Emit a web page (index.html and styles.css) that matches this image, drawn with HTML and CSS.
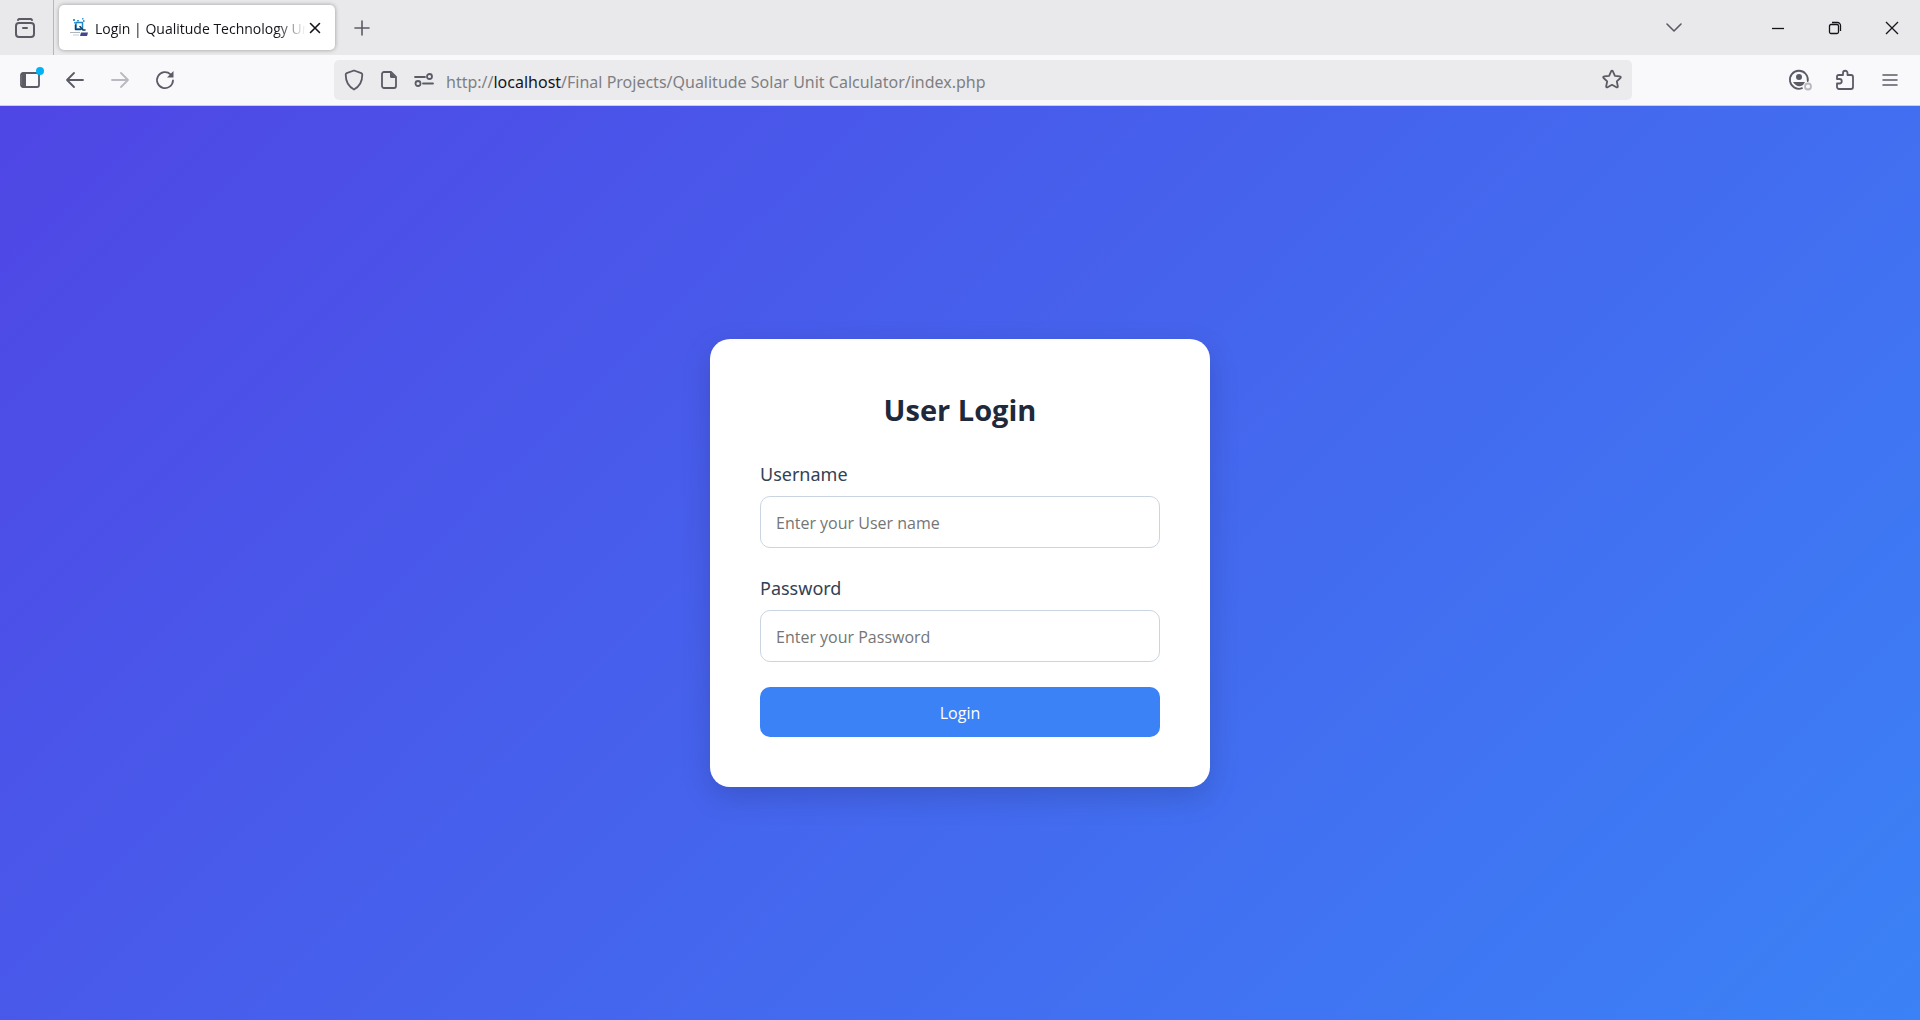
FILE: index.html
```html
<!DOCTYPE html>
<html lang="en">
<head>
<meta charset="utf-8">
<meta name="viewport" content="width=device-width, initial-scale=1">
<title>Login | Qualitude Technology Unit</title>
<link rel="stylesheet" href="styles.css">
</head>
<body>
<header class="browser">
  <div class="tabstrip">
    <button class="icon-btn recent" aria-label="Recent browsing">
      <svg width="22" height="22" viewBox="0 0 22 22"><path d="M4 3L5 2h12l1 1"/><rect x="2" y="6" width="18" height="14" rx="3"/><path d="M9 11h4"/></svg>
    </button>
    <div class="tab">
      <svg class="favicon" width="18" height="20" viewBox="0 0 18 20">
        <path d="M6 4.500h6.500v6.500H6z" fill="none" stroke="#1f86c6" stroke-width="1.500"/>
        <path d="M10 8.500l3 3.500h2" fill="none" stroke="#173f66" stroke-width="1.600"/>
        <path d="M5.500 7v4.500h5" fill="none" stroke="#173f66" stroke-width="1.500"/>
        <path d="M3 1h2v2H3zM7 2h2v1.500H7zM12 0h1.500v1.500H12zM13 2h1.500v2H13zM4 4h1.500v1.500H4z" fill="#3b9ad6"/>
        <path d="M0 14h10v1H0z" fill="#b0b4bb"/>
        <path d="M11 14.500h7l-1 3.500h-7z" fill="#41478a"/>
        <path d="M3 16.500h6v1H3z" fill="#c5cad4"/>
      </svg>
      <span class="tab-title">Login | Qualitude Technology Unit</span>
      <button class="tab-close" aria-label="Close tab"><svg width="12" height="12" viewBox="0 0 12 12"><path d="M1.500 1.500l9 9m0-9l-9 9"/></svg></button>
    </div>
    <button class="icon-btn new-tab" aria-label="New tab"><svg width="16" height="16" viewBox="0 0 16 16"><path d="M8 1v14M1 8h14"/></svg></button>
    <div class="spring"></div>
    <button class="icon-btn all-tabs" aria-label="List all tabs"><svg width="18" height="12" viewBox="0 0 18 12"><path d="M2 2l7 7 7-7"/></svg></button>
    <div class="window-controls">
      <button class="icon-btn" aria-label="Minimize"><svg width="14" height="14" viewBox="0 0 14 14"><path d="M1 7.500h12"/></svg></button>
      <button class="icon-btn" aria-label="Restore"><svg width="14" height="14" viewBox="0 0 14 14"><rect x="1.500" y="3.500" width="9" height="9" rx="1.500"/><path d="M4 1.500h5.500a3 3 0 0 1 3 3V10"/></svg></button>
      <button class="icon-btn" aria-label="Close"><svg width="14" height="14" viewBox="0 0 14 14"><path d="M1 1l12 12M13 1L1 13"/></svg></button>
    </div>
  </div>
  <div class="toolbar">
    <button class="icon-btn sidebar-btn" aria-label="Show sidebar"><svg width="22" height="18" viewBox="0 0 22 18"><rect x="2" y="2" width="18" height="14" rx="2"/><path d="M3 2h4v14H3z" fill="#5b5b66" stroke="none"/></svg><span class="dot"></span></button>
    <button class="icon-btn" aria-label="Back"><svg width="20" height="18" viewBox="0 0 20 18"><path d="M18 9H2m7-7L2 9l7 7"/></svg></button>
    <button class="icon-btn" aria-label="Forward" disabled><svg width="20" height="18" viewBox="0 0 20 18"><path d="M2 9h16m-7-7l7 7-7 7"/></svg></button>
    <button class="icon-btn" aria-label="Reload"><svg width="20" height="20" viewBox="0 0 20 20"><path d="M18 10.500a8 8 0 1 1-2.500-6.200"/><path d="M18.500 1v6.500H12z" fill="#5b5b66" stroke="none"/></svg></button>
    <div class="toolbar-gap gap-start"></div>
    <div class="urlbar">
      <button class="url-btn" aria-label="Tracking protection"><svg width="20" height="22" viewBox="0 0 20 22"><path d="M10 1.500l7.300 2.600q1 .4 1 1.500c0 6.400-2.600 12-8.300 14.900C4.300 17.600 1.700 12 1.700 5.600q0-1.100 1-1.500z"/></svg></button>
      <button class="url-btn" aria-label="Site information"><svg width="18" height="20" viewBox="0 0 18 20"><path d="M4 2h7l5 5v9a2 2 0 0 1-2 2H4a2 2 0 0 1-2-2V4a2 2 0 0 1 2-2z"/><path d="M10 2l6 6h-4.500A1.500 1.500 0 0 1 10 6.500z" fill="#5b5b66" stroke="none"/></svg></button>
      <button class="url-btn" aria-label="Permissions"><svg width="20" height="14" viewBox="0 0 20 14"><path d="M1 4h10M9 10.500h10"/><circle cx="15.500" cy="3.500" r="2.500"/><circle cx="4" cy="10.500" r="2.500"/></svg></button>
      <div class="url-text" role="textbox" aria-label="Address" tabindex="0">http://<span class="host">localhost</span>/Final Projects/Qualitude Solar Unit Calculator/index.php</div>
      <button class="url-btn star" aria-label="Bookmark this page"><svg width="22" height="22" viewBox="0 0 22 22"><path d="M10.100 2.300q.9-1.500 1.800 0l2 4.500 4.900.6q1.700.3.600 1.600l-3.600 3.300 1 4.900q.2 1.800-1.400 1L11 15.800l-4.400 2.400q-1.600.8-1.400-1l1-4.900L2.600 9Q1.500 7.700 3.200 7.400l4.900-.6z"/></svg></button>
    </div>
    <div class="toolbar-gap gap-end"></div>
    <button class="icon-btn" aria-label="Account"><svg width="24" height="22" viewBox="0 0 24 22"><path d="M19.800 12A9 9 0 1 0 14 19.200"/><circle cx="11" cy="8" r="3" fill="#5b5b66" stroke="none"/><path d="M5 13h12l-2 3-2 1q-5 1-8-4z" fill="#5b5b66" stroke="none"/><circle cx="20" cy="17.500" r="3" stroke="#b9b9bf"/></svg></button>
    <button class="icon-btn" aria-label="Extensions"><svg width="20" height="22" viewBox="0 0 20 22"><path d="M3.500 6H8V4a2 2 0 0 1 4.500 0v2H16a2 2 0 0 1 2 2v10a2 2 0 0 1-2 2H4a2 2 0 0 1-2-2v-3.500h2.500a2 2 0 0 0 0-4.500H2V7.500A1.500 1.500 0 0 1 3.500 6z"/></svg></button>
    <button class="icon-btn menu-btn" aria-label="Menu"><svg width="16" height="14" viewBox="0 0 16 14"><path d="M1 2h14M1 7h14M1 12h14"/></svg></button>
  </div>
</header>
<main class="page">
  <form class="card">
    <h1>User Login</h1>
    <label for="username">Username</label>
    <input id="username" type="text" placeholder="Enter your User name">
    <label for="password">Password</label>
    <input id="password" type="password" placeholder="Enter your Password">
    <button class="login" type="button">Login</button>
  </form>
</main>
</body>
</html>
```
FILE: styles.css
```css
* {
  box-sizing: border-box;
}

body {
  margin: 0;
  min-height: 100vh;
  display: flex;
  flex-direction: column;
  font-family: "Segoe UI", "Open Sans", "Noto Sans", sans-serif;
}

button {
  border: 0;
  padding: 0;
  background: none;
  font: inherit;
}

svg {
  display: block;
  flex: none;
  fill: none;
  stroke: #5b5b66;
  stroke-width: 2;
  stroke-linecap: round;
  stroke-linejoin: round;
}

/* Browser window */
.browser {
  border-bottom: 1px solid #cfcfd6;
}

.icon-btn {
  display: flex;
  align-items: center;
  justify-content: center;
  flex: none;
  width: 45px;
  height: 45px;
}

.icon-btn:disabled {
  opacity: 0.4;
}

.tabstrip {
  display: flex;
  align-items: center;
  height: 55px;
  background: #e9e9eb;
}

.recent {
  width: 54px;
  height: 55px;
  padding-right: 4px;
  border-right: 1px solid #b5b5ba;
}

.tab {
  display: flex;
  align-items: center;
  width: 276px;
  height: 45px;
  margin-left: 5px;
  padding: 0 14px 0 11px;
  border-radius: 5px;
  background: #fff;
  box-shadow: 0 0 4px rgba(0, 0, 0, 0.35);
}

.favicon {
  stroke: none;
}

.tab-title {
  flex: 1;
  min-width: 0;
  margin-left: 7px;
  padding-top: 2px;
  overflow: hidden;
  white-space: nowrap;
  font-size: 14px;
  line-height: 20px;
  color: #15141a;
  -webkit-mask-image: linear-gradient(to left, transparent, #000 30px);
  mask-image: linear-gradient(to left, transparent, #000 30px);
}

.tab-close {
  margin-left: 3px;
}

.tab-close svg {
  stroke: #15141a;
  stroke-width: 1.6;
}

.new-tab {
  margin-left: 4px;
}

.new-tab svg,
.all-tabs svg,
.menu-btn svg {
  stroke-width: 1.6;
}

.spring {
  flex: 1;
}

.all-tabs {
  margin-right: 53px;
}

.window-controls {
  display: flex;
}

.window-controls .icon-btn {
  width: 57px;
}

.window-controls svg {
  stroke: #15141a;
  stroke-width: 1.3;
  stroke-linecap: butt;
}

.toolbar {
  display: flex;
  align-items: center;
  height: 50px;
  padding: 0 8px 0 7px;
  background: #f9f9fb;
}

.toolbar svg {
  stroke-width: 1.8;
}

.toolbar .menu-btn svg {
  stroke-width: 1.5;
}

.sidebar-btn {
  position: relative;
}

.dot {
  position: absolute;
  top: 9px;
  right: 8px;
  width: 8px;
  height: 8px;
  border-radius: 50%;
  background: #00b3f4;
}

.gap-start {
  flex: 0 1 147px;
}

.gap-end {
  flex: 0 1 145px;
}

.urlbar {
  display: flex;
  align-items: center;
  flex: 1;
  min-width: 0;
  height: 40px;
  padding: 0 3px 0 2px;
  border-radius: 5px;
  background: #ebebed;
}

.url-btn {
  display: flex;
  align-items: center;
  justify-content: center;
  flex: none;
  width: 35px;
  height: 35px;
}

.url-text {
  flex: 1;
  min-width: 0;
  margin-left: 5px;
  padding-top: 3px;
  overflow: hidden;
  white-space: nowrap;
  font-family: "Segoe UI", "Noto Sans", sans-serif;
  font-size: 16px;
  line-height: 24px;
  color: #7f7f83;
}

.host {
  color: #15141a;
}

/* Login page */
.page {
  flex: 1;
  display: flex;
  align-items: center;
  justify-content: center;
  background: linear-gradient(135deg, #4f46e5, #3b82f6);
}

.card {
  display: flex;
  flex-direction: column;
  width: 500px;
  max-width: 100%;
  padding: 50px;
  border-radius: 20px;
  background: #fff;
  box-shadow: 0 10px 30px rgba(0, 0, 0, 0.15);
}

.card h1 {
  margin: 0 0 28px;
  font-size: 29px;
  line-height: 42px;
  text-align: center;
  color: #1e293b;
}

.card label {
  margin-bottom: 7px;
  font-family: "Segoe UI", "Noto Sans", sans-serif;
  font-size: 18px;
  line-height: 30px;
  color: #334155;
}

.card input {
  height: 52px;
  margin-bottom: 25px;
  padding: 2px 15px 0;
  border: 1px solid #cbd5e1;
  border-radius: 10px;
  background: #fff;
  font-family: inherit;
  font-size: 16px;
}

.card input::placeholder {
  color: #757575;
  opacity: 1;
}

.login {
  height: 50px;
  padding-top: 2px;
  border-radius: 10px;
  background: #3b82f6;
  font-size: 16px;
  color: #fff;
}
```
